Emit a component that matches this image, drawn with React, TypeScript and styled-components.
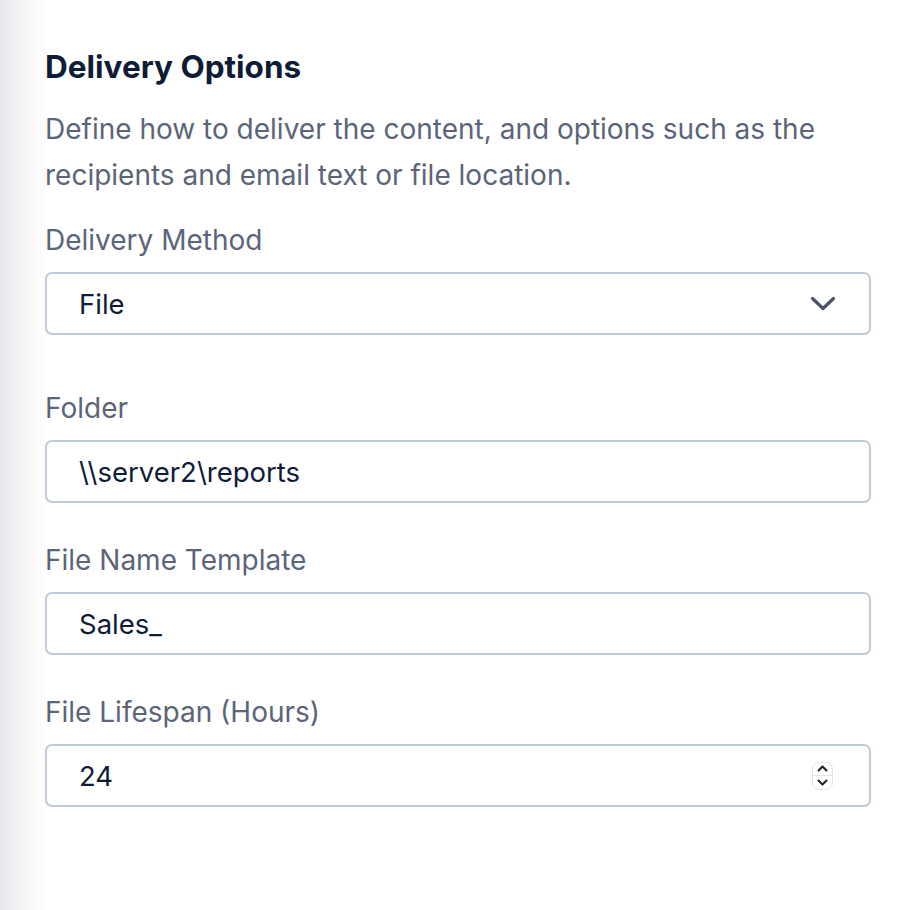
import styled, { createGlobalStyle } from 'styled-components';

const GlobalStyle = createGlobalStyle`
  html, body {
    margin: 0;
    padding: 0;
    background: #ffffff;
  }
  body {
    font-family: Inter, 'Noto Sans', sans-serif;
    -webkit-font-smoothing: antialiased;
  }
`;

const Page = styled.div`
  min-height: 910px;
  background: linear-gradient(to right, #e5e7eb 0px, #f2f3f5 20px, #fbfbfc 36px, #ffffff 50px);
  padding: 49px 47px 0 45px;
  box-sizing: border-box;
`;

const Title = styled.h2`
  margin: 0;
  font-size: 31.5px;
  line-height: 36px;
  font-weight: 700;
  color: #0f1c38;
`;

const Description = styled.p`
  margin: 21px 0 0;
  font-size: 28px;
  line-height: 46px;
  color: #5b6579;
`;

const Field = styled.div<{ $gap: number }>`
  display: flex;
  flex-direction: column;
  margin-top: ${(p) => p.$gap}px;
`;

const Label = styled.label`
  font-size: 28px;
  line-height: 46px;
  color: #5b6579;
  margin-bottom: 9px;
`;

const Box = styled.div`
  display: flex;
  align-items: center;
  height: 63px;
  box-sizing: border-box;
  border: 2px solid #c2c9d6;
  border-radius: 7px;
  background: #ffffff;
  padding: 0 33px 0 32px;
`;

const TextInput = styled.input`
  flex: 1;
  min-width: 0;
  border: none;
  outline: none;
  background: transparent;
  padding: 0;
  font-family: Inter, 'Noto Sans', sans-serif;
  font-size: 27.5px;
  color: #0f1c38;
`;

const Spinner = styled.div`
  display: flex;
  flex-direction: column;
  width: 21px;
  height: 28px;
  box-sizing: border-box;
  border: 1px solid #e2e4e8;
  border-radius: 7px;
  overflow: hidden;
  margin-right: 3px;
`;

const SpinHalf = styled.div<{ $top?: boolean }>`
  flex: 1;
  display: flex;
  align-items: center;
  justify-content: center;
  border-bottom: ${(p) => (p.$top ? '1px solid #e2e4e8' : 'none')};
`;

const Chevron = () => (
  <svg width="26" height="15" viewBox="0 0 26 15" fill="none">
    <path d="M2.5 2.5l10.5 10 10.5-10" stroke="#4a5264" strokeWidth="3.2" strokeLinecap="round" strokeLinejoin="round" />
  </svg>
);

const SmallArrow = ({ up }: { up?: boolean }) => (
  <svg width="11" height="7" viewBox="0 0 11 7" fill="none">
    <path
      d={up ? 'M1.5 5.5L5.5 1.5 9.5 5.5' : 'M1.5 1.5L5.5 5.5 9.5 1.5'}
      stroke="#1c212c"
      strokeWidth="2"
      strokeLinecap="round"
      strokeLinejoin="round"
    />
  </svg>
);

export default function App() {
  return (
    <>
      <GlobalStyle />
      <Page>
        <Title>Delivery Options</Title>
        <Description>
          Define how to deliver the content, and options such as the recipients and email text or file location.
        </Description>

        <Field $gap={19}>
          <Label>Delivery Method</Label>
          <Box>
            <TextInput readOnly value="File" />
            <Chevron />
          </Box>
        </Field>

        <Field $gap={50}>
          <Label>Folder</Label>
          <Box>
            <TextInput readOnly value={'\\\\server2\\reports'} />
          </Box>
        </Field>

        <Field $gap={34}>
          <Label>File Name Template</Label>
          <Box>
            <TextInput readOnly value="Sales_" />
          </Box>
        </Field>

        <Field $gap={34}>
          <Label>File Lifespan (Hours)</Label>
          <Box>
            <TextInput readOnly value="24" />
            <Spinner>
              <SpinHalf $top>
                <SmallArrow up />
              </SpinHalf>
              <SpinHalf>
                <SmallArrow />
              </SpinHalf>
            </Spinner>
          </Box>
        </Field>
      </Page>
    </>
  );
}
